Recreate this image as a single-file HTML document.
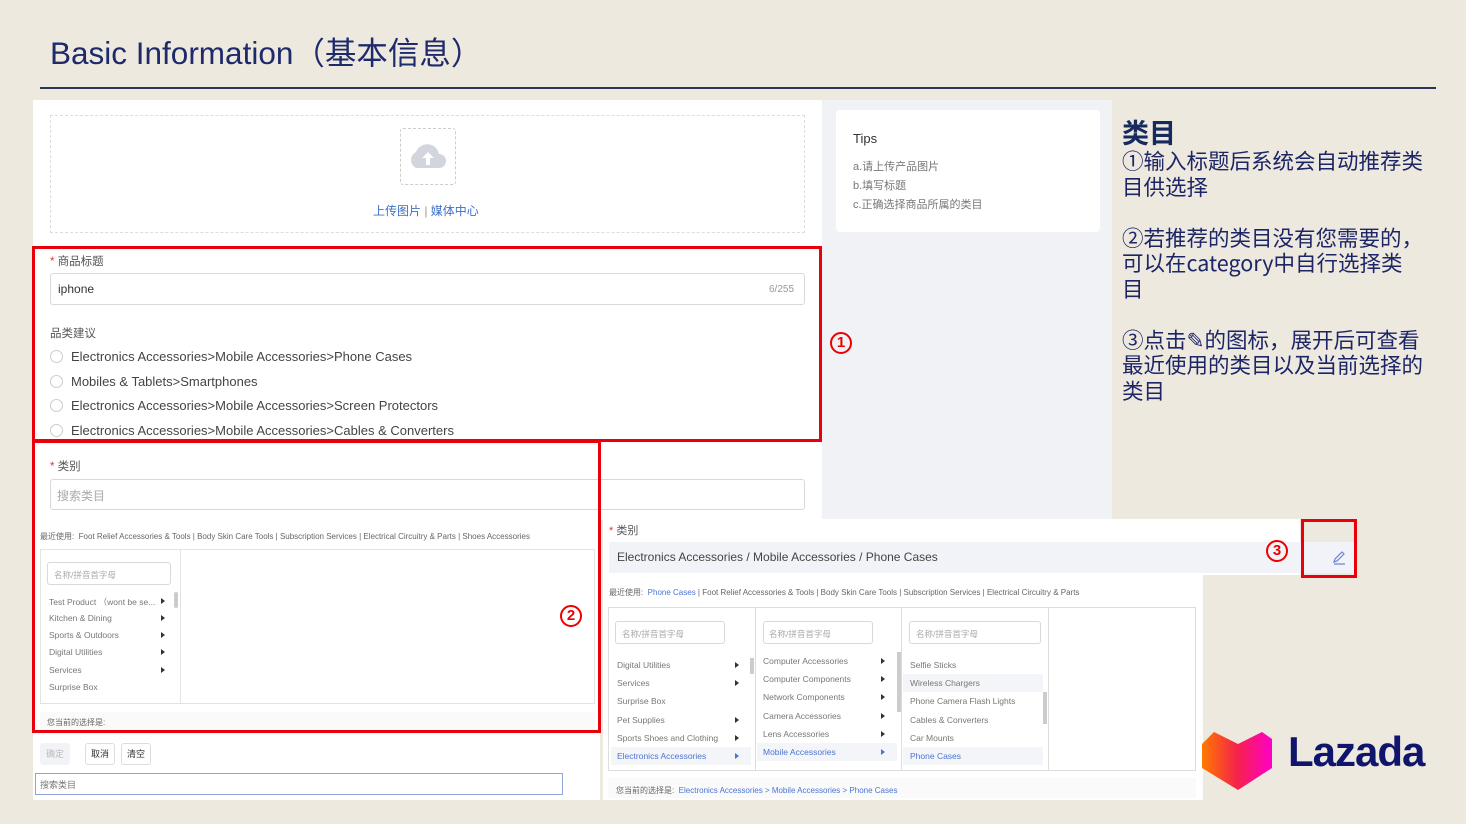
<!DOCTYPE html>
<html><head><meta charset="utf-8"><style>
*{margin:0;padding:0;box-sizing:border-box}
body{width:1466px;height:824px;background:#eee9df;position:relative;overflow:hidden;font-family:"Liberation Sans","Noto Sans CJK SC",sans-serif;color:#333}
.a{position:absolute}
.t{font-size:11px;color:#555;white-space:nowrap}
.s{font-size:8px;color:#666;white-space:nowrap}
.rb{border:3px solid #e8000b;position:absolute}
.num{position:absolute;width:22px;height:22px;border:2.5px solid #e00;border-radius:50%;color:#e00;font-weight:bold;font-size:15px;text-align:center;line-height:17px}
.inp{position:absolute;border:1px solid #d9d9d9;border-radius:3px;background:#fff}
.tri{display:inline-block;border-left:4px solid #333;border-top:3.5px solid transparent;border-bottom:3.5px solid transparent;position:absolute;right:6px}
.li{position:absolute;font-size:8.5px;color:#777;white-space:nowrap}
.rad{display:inline-block;width:13px;height:13px;border:1px solid #ccc;border-radius:50%;vertical-align:-2px;margin-right:8px}
</style></head><body>
<div class="a" style="left:50px;top:28px;font-size:31.5px;color:#1f2a6b">Basic Information（基本信息）</div>
<div class="a" style="left:40px;top:87px;width:1396px;height:2px;background:#2b3656"></div>

<div class="a" style="left:822px;top:100px;width:290px;height:420px;background:#f1f2f5"></div>
<div class="a" style="left:33px;top:100px;width:789px;height:420px;background:#fff"></div>
<div class="a" style="left:50px;top:115px;width:755px;height:118px;border:1px dashed #ddd"></div>
<div class="a" style="left:400px;top:128px;width:56px;height:57px;border:1px dashed #ccc;border-radius:3px"></div>
<svg class="a" style="left:406px;top:140px" width="44" height="32"><path d="M10 28a9 9 0 0 1 0-16a12 12 0 0 1 23 2a7 7 0 0 1 0 14z" fill="#d3d5de"/><path d="M22 12l-6 6h4v7h4v-7h4z" fill="#fff"/></svg>
<div class="a" style="left:373px;top:202px;font-size:12px;color:#3f6fc8">上传图片 <span style="color:#999">|</span> 媒体中心</div>
<div class="a" style="left:836px;top:110px;width:264px;height:122px;background:#fff;border-radius:4px"></div>
<div class="a" style="left:853px;top:131px;font-size:13px;color:#333">Tips</div>
<div class="a" style="left:853px;top:158px;font-size:11px;color:#777;line-height:19px">a.请上传产品图片<br>b.填写标题<br>c.正确选择商品所属的类目</div>

<div class="a t" style="left:50px;top:253px;font-size:11.5px"><span style="color:#e33">* </span>商品标题</div>
<div class="inp" style="left:50px;top:273px;width:755px;height:32px"></div>
<div class="a" style="left:58px;top:282px;font-size:12px;color:#333">iphone</div>
<div class="a" style="left:769px;top:284px;font-size:10px;color:#999">6/255</div>
<div class="a t" style="left:50px;top:325px;font-size:11.5px">品类建议</div>
<div class="a" style="left:50px;top:345px;font-size:13px;color:#444;line-height:24.5px;white-space:nowrap">
<div><span class="rad"></span>Electronics Accessories&gt;Mobile Accessories&gt;Phone Cases</div>
<div><span class="rad"></span>Mobiles &amp; Tablets&gt;Smartphones</div>
<div><span class="rad"></span>Electronics Accessories&gt;Mobile Accessories&gt;Screen Protectors</div>
<div><span class="rad"></span>Electronics Accessories&gt;Mobile Accessories&gt;Cables &amp; Converters</div>
</div>
<div class="rb" style="left:32px;top:246px;width:790px;height:196px"></div>
<div class="num" style="left:830px;top:332px">1</div>

<div class="a" style="left:33px;top:442px;width:567px;height:358px;background:#fff"></div>
<div class="a t" style="left:50px;top:458px;font-size:11.5px"><span style="color:#e33">* </span>类别</div>
<div class="inp" style="left:50px;top:479px;width:755px;height:31px"></div>
<div class="a" style="left:57px;top:487px;font-size:12px;color:#aaa">搜索类目</div>
<div class="a s" style="left:40px;top:531px">最近使用:&nbsp; Foot Relief Accessories &amp; Tools | Body Skin Care Tools | Subscription Services | Electrical Circuitry &amp; Parts | Shoes Accessories</div>
<div class="a" style="left:40px;top:549px;width:555px;height:155px;border:1px solid #e3e3e3"></div>
<div class="a" style="left:180px;top:549px;width:1px;height:155px;background:#e3e3e3"></div>
<div class="inp" style="left:47px;top:562px;width:124px;height:23px"></div>
<div class="li" style="left:54px;top:569px;color:#aaa">名称/拼音首字母</div>
<div class="a" style="left:174px;top:592px;width:4px;height:16px;background:#ccc;border-radius:2px"></div>
<div class="li" style="left:49px;top:596px;width:122px">Test Product （wont be se...<span class="tri" style="top:2px"></span></div>
<div class="li" style="left:49px;top:613px;width:122px">Kitchen &amp; Dining<span class="tri" style="top:2px"></span></div>
<div class="li" style="left:49px;top:630px;width:122px">Sports &amp; Outdoors<span class="tri" style="top:2px"></span></div>
<div class="li" style="left:49px;top:647px;width:122px">Digital Utilities<span class="tri" style="top:2px"></span></div>
<div class="li" style="left:49px;top:665px;width:122px">Services<span class="tri" style="top:2px"></span></div>
<div class="li" style="left:49px;top:682px">Surprise Box</div>
<div class="a" style="left:40px;top:712px;width:555px;height:20px;background:#fafafa"></div>
<div class="a s" style="left:47px;top:717px">您当前的选择是:</div>
<div class="rb" style="left:32px;top:440px;width:569px;height:293px"></div>
<div class="num" style="left:560px;top:605px">2</div>
<div class="a" style="left:40px;top:743px;width:30px;height:22px;background:#f2f3f6;border-radius:3px;font-size:9px;color:#bbb;text-align:center;line-height:22px">确定</div>
<div class="a" style="left:85px;top:743px;width:30px;height:22px;border:1px solid #ddd;border-radius:3px;font-size:9px;text-align:center;line-height:20px">取消</div>
<div class="a" style="left:121px;top:743px;width:30px;height:22px;border:1px solid #ddd;border-radius:3px;font-size:9px;text-align:center;line-height:20px">清空</div>
<div class="a" style="left:35px;top:773px;width:528px;height:22px;border:1px solid #93a5d8;background:#fff;font-size:9px;color:#777;padding:4px 4px">搜索类目</div>

<div class="a" style="left:603px;top:519px;width:697px;height:56px;background:#fff"></div>
<div class="a" style="left:603px;top:575px;width:600px;height:225px;background:#fff"></div>
<div class="a t" style="left:609px;top:522px;font-size:11px"><span style="color:#e33">* </span>类别</div>
<div class="a" style="left:609px;top:542px;width:745px;height:31px;background:#f1f3f8"></div>
<div class="a" style="left:617px;top:550px;font-size:12px;color:#444">Electronics Accessories / Mobile Accessories / Phone Cases</div>
<svg class="a" style="left:1331px;top:550px" width="16" height="16"><path d="M3 12l1-3 7-7 2 2-7 7zM3 14h11" stroke="#6b85d6" fill="none" stroke-width="1.2"/></svg>
<div class="rb" style="left:1301px;top:519px;width:56px;height:59px"></div>
<div class="num" style="left:1266px;top:540px">3</div>
<div class="a s" style="left:609px;top:587px">最近使用:&nbsp; <span style="color:#4a74d6">Phone Cases</span> | Foot Relief Accessories &amp; Tools | Body Skin Care Tools | Subscription Services | Electrical Circuitry &amp; Parts</div>
<div class="a" style="left:608px;top:607px;width:588px;height:164px;border:1px solid #ddd"></div>
<div class="a" style="left:755px;top:607px;width:1px;height:164px;background:#ddd"></div>
<div class="a" style="left:901px;top:607px;width:1px;height:164px;background:#ddd"></div>
<div class="a" style="left:1048px;top:607px;width:1px;height:164px;background:#ddd"></div>
<div class="inp" style="left:615px;top:621px;width:110px;height:23px"></div><div class="li" style="left:622px;top:628px;color:#aaa">名称/拼音首字母</div>
<div class="inp" style="left:763px;top:621px;width:110px;height:23px"></div><div class="li" style="left:769px;top:628px;color:#aaa">名称/拼音首字母</div>
<div class="inp" style="left:909px;top:621px;width:132px;height:23px"></div><div class="li" style="left:916px;top:628px;color:#aaa">名称/拼音首字母</div>
<div class="a" style="left:611px;top:747px;width:140px;height:18px;background:#f4f5f8"></div>
<div class="a" style="left:757px;top:743px;width:140px;height:18px;background:#f4f5f8"></div>
<div class="a" style="left:903px;top:674px;width:140px;height:18px;background:#f4f5f8"></div>
<div class="a" style="left:903px;top:747px;width:140px;height:18px;background:#f4f5f8"></div>
<div class="a" style="left:750px;top:658px;width:4px;height:16px;background:#ccc"></div>
<div class="a" style="left:897px;top:652px;width:4px;height:60px;background:#ccc"></div>
<div class="a" style="left:1043px;top:692px;width:4px;height:32px;background:#ccc"></div>
<div class="li" style="left:617px;top:660px;width:128px">Digital Utilities<span class="tri" style="top:2px"></span></div>
<div class="li" style="left:617px;top:678px;width:128px">Services<span class="tri" style="top:2px"></span></div>
<div class="li" style="left:617px;top:696px">Surprise Box</div>
<div class="li" style="left:617px;top:715px;width:128px">Pet Supplies<span class="tri" style="top:2px"></span></div>
<div class="li" style="left:617px;top:733px;width:128px">Sports Shoes and Clothing<span class="tri" style="top:2px"></span></div>
<div class="li" style="left:617px;top:751px;width:128px;color:#4a74d6">Electronics Accessories<span class="tri" style="top:2px;border-left-color:#4a74d6"></span></div>
<div class="li" style="left:763px;top:656px;width:128px">Computer Accessories<span class="tri" style="top:2px"></span></div>
<div class="li" style="left:763px;top:674px;width:128px">Computer Components<span class="tri" style="top:2px"></span></div>
<div class="li" style="left:763px;top:692px;width:128px">Network Components<span class="tri" style="top:2px"></span></div>
<div class="li" style="left:763px;top:711px;width:128px">Camera Accessories<span class="tri" style="top:2px"></span></div>
<div class="li" style="left:763px;top:729px;width:128px">Lens Accessories<span class="tri" style="top:2px"></span></div>
<div class="li" style="left:763px;top:747px;width:128px;color:#4a74d6">Mobile Accessories<span class="tri" style="top:2px;border-left-color:#4a74d6"></span></div>
<div class="li" style="left:910px;top:660px">Selfie Sticks</div>
<div class="li" style="left:910px;top:678px">Wireless Chargers</div>
<div class="li" style="left:910px;top:696px">Phone Camera Flash Lights</div>
<div class="li" style="left:910px;top:715px">Cables &amp; Converters</div>
<div class="li" style="left:910px;top:733px">Car Mounts</div>
<div class="li" style="left:910px;top:751px;color:#4a74d6">Phone Cases</div>
<div class="a" style="left:608px;top:778px;width:588px;height:20px;background:#fafafa"></div>
<div class="a s" style="left:616px;top:785px">您当前的选择是:&nbsp; <span style="color:#4a74d6">Electronics Accessories &gt; Mobile Accessories &gt; Phone Cases</span></div>

<div class="a" style="left:1122px;top:116px;font-family:'Noto Sans CJK SC',sans-serif;color:#1c2566;font-size:21.5px;line-height:25.5px;width:320px;white-space:nowrap">
<div style="font-weight:bold;font-size:27px;line-height:32px;color:#162a60">类目</div>
①输入标题后系统会自动推荐类<br>目供选择<br><br>②若推荐的类目没有您需要的，<br>可以在category中自行选择类<br>目<br><br>③点击✎的图标，展开后可查看<br>最近使用的类目以及当前选择的<br>类目</div>

<svg class="a" style="left:1202px;top:730px" width="74" height="62"><defs><linearGradient id="g" x1="0" x2="1"><stop offset="0" stop-color="#ff7a00"/><stop offset=".5" stop-color="#f5224a"/><stop offset="1" stop-color="#ff00c8"/></linearGradient></defs><path d="M0 14L12 2L36 14L60 2L70 9V38L36 60L0 38Z" fill="url(#g)"/></svg>
<div class="a" style="left:1288px;top:728px;font-size:42px;font-weight:bold;color:#0f146d;letter-spacing:-1px">Lazada</div>
</body></html>
